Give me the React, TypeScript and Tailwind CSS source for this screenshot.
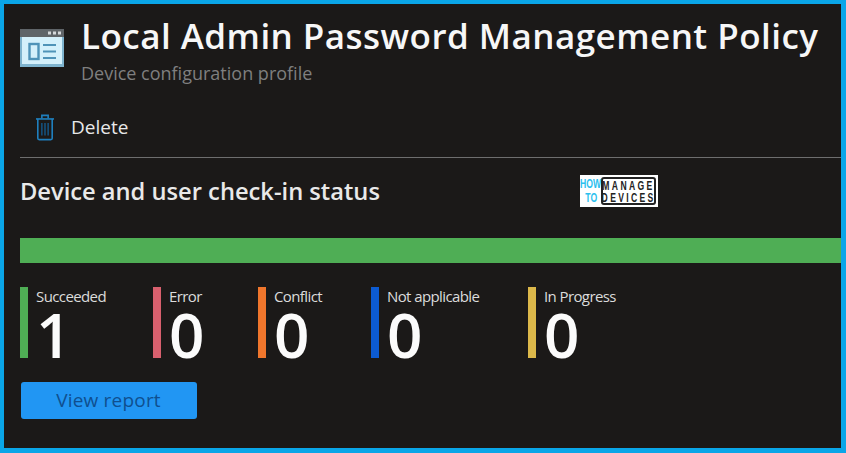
import React from 'react';

const stats = [
  { label: 'Succeeded', value: '1', bar: 'bg-[#4fae55]', width: 'w-[133px]' },
  { label: 'Error', value: '0', bar: 'bg-[#d9606e]', width: 'w-[105px]' },
  { label: 'Conflict', value: '0', bar: 'bg-[#f0762c]', width: 'w-[113px]' },
  { label: 'Not applicable', value: '0', bar: 'bg-[#0c5bd3]', width: 'w-[157px]' },
  { label: 'In Progress', value: '0', bar: 'bg-[#dcb84a]', width: 'w-[110px]' },
];

const BladeIcon = () => (
  <svg width="44" height="38" viewBox="0 0 44 38" className="shrink-0">
    <rect x="0" y="0" width="44" height="38" fill="#7fb4cf" />
    <rect x="0" y="0" width="44" height="8" fill="#5f6468" />
    <rect x="28" y="2.5" width="3" height="3" fill="#d5d8da" />
    <rect x="33" y="2.5" width="3" height="3" fill="#d5d8da" />
    <rect x="38" y="2.5" width="3" height="3" fill="#d5d8da" />
    <rect x="2" y="8" width="40" height="27" fill="#d4f0fb" />
    <rect x="9.5" y="15" width="9" height="15" fill="none" stroke="#4f93b8" strokeWidth="2.4" />
    <path d="M23 16h13M23 22.5h13M23 29h13" stroke="#4f93b8" strokeWidth="2.2" />
  </svg>
);

const TrashIcon = () => (
  <svg width="20" height="27" viewBox="0 0 22 30" fill="none" stroke="#1f7fbd" strokeWidth="1.8" className="shrink-0">
    <path d="M1 5.5h20" />
    <path d="M7.5 5V1.5h7V5" />
    <path d="M3 5.5V27a1.5 1.5 0 0 0 1.5 1.5h13A1.5 1.5 0 0 0 19 27V5.5" />
    <path d="M7.5 10v14M11 10v14M14.5 10v14" stroke="#14507c" />
  </svg>
);

const Logo = () => (
  <div className="flex h-[32px] w-[78px] items-center bg-white pl-px font-['Liberation_Sans',sans-serif] font-bold">
    <div className="flex w-[20px] flex-col items-center text-[12px] leading-[14px] text-[#2cc0ee]">
      <span className="scale-x-[0.72] scale-y-[1.1]">HOW</span>
      <span className="scale-x-[0.72] scale-y-[1.1]">TO</span>
    </div>
    <div className="flex h-[28px] w-[55px] flex-col items-center justify-center rounded-[3px] border-2 border-[#222] text-[11px] leading-[12px] tracking-[3px] text-[#222]">
      <span className="scale-x-[0.78] scale-y-[1.15]">MANAGE</span>
      <span className="scale-x-[0.78] scale-y-[1.15]">DEVICES</span>
    </div>
  </div>
);

export default function App() {
  return (
    <div className="flex h-[453px] w-[846px] flex-col overflow-hidden border-t-4 border-r-[5px] border-b-[5px] border-l-4 border-[#0aa6e8] bg-[#1b1918] pt-[12px] pl-[16px] font-['Open_Sans','Noto_Sans',sans-serif] text-white">
      <div className="flex h-[62px] items-start">
        <div className="mt-[13px]">
          <BladeIcon />
        </div>
        <div className="ml-[17px] min-w-0">
          <h1 className="mt-px text-[35px] leading-[38px] font-semibold tracking-[0.46px] whitespace-nowrap text-[#f7f7f7]">
            Local Admin Password Management Policy
          </h1>
          <p className="mt-[8px] text-[18px] leading-[20px] text-[#7f7f7f]">Device configuration profile</p>
        </div>
      </div>

      <div className="mt-[28px] flex h-[42px] items-center pl-[15px]">
        <TrashIcon />
        <span className="ml-[16px] text-[19px] leading-[24px] text-[#e8e8e8]">Delete</span>
      </div>

      <div className="mt-[9px] h-px bg-[#6e6e6e]" />

      <div className="mt-[16px] flex h-[34px] items-center">
        <h2 className="w-[560px] text-[23.7px] leading-[30px] font-semibold text-[#e9e9e9]">
          Device and user check-in status
        </h2>
        <Logo />
      </div>

      <div className="mt-[30px] h-[25px] bg-[#4fae55]" />

      <div className="mt-[24px] flex">
        {stats.map((s) => (
          <div key={s.label} className={`flex h-[71px] shrink-0 ${s.width}`}>
            <div className={`w-[8px] shrink-0 ${s.bar}`} />
            <div className="ml-[8px]">
              <div className="text-[15px] leading-[18px] tracking-[-0.6px] whitespace-nowrap text-[#dcdcdc]">{s.label}</div>
              <div className="text-[62px] leading-[58px] font-semibold text-[#fbfbfb]">{s.value}</div>
            </div>
          </div>
        ))}
      </div>

      <button className="mt-[24px] ml-px h-[37px] w-[176px] rounded-[3px] bg-[#2196f3] pr-[1px] text-[19px] font-medium tracking-[0.2px] text-[#0f4f8f]">
        View report
      </button>
    </div>
  );
}
